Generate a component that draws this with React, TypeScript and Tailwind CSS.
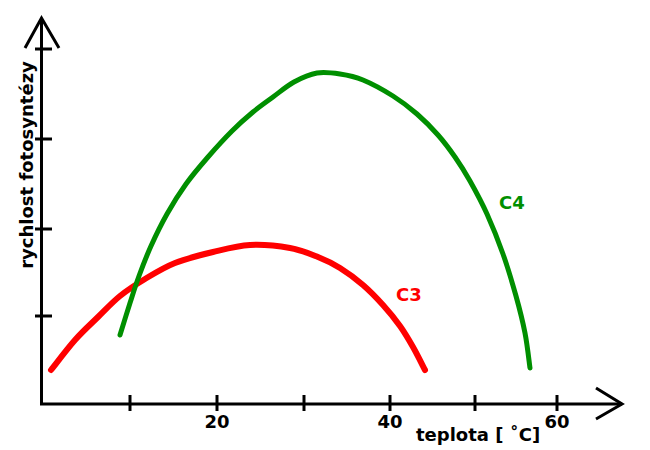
const c3: [number, number][] = [
  [51, 370], [75, 340], [98, 317], [120, 296], [145, 279], [175, 263], [213, 252],
  [250, 245], [290, 248], [318, 257], [340, 268], [363, 285], [383, 305], [400, 326],
  [413, 347], [425, 370],
];

const c4: [number, number][] = [
  [120, 335], [130, 303], [139, 276], [151, 246], [167, 214], [186, 184], [208, 157],
  [232, 131], [253, 112], [273, 97], [294, 82], [317, 73], [340, 74], [363, 80],
  [393, 96], [417, 114], [438, 135], [455, 157], [470, 181], [487, 214], [503, 254],
  [516, 296], [525, 333], [530, 368],
];

// catmull-rom -> cubic bezier
function smooth(pts: [number, number][]) {
  let d = `M${pts[0][0]},${pts[0][1]}`;
  for (let i = 0; i < pts.length - 1; i++) {
    const p0 = pts[i - 1] ?? pts[i];
    const p1 = pts[i];
    const p2 = pts[i + 1];
    const p3 = pts[i + 2] ?? p2;
    const c1x = p1[0] + (p2[0] - p0[0]) / 6;
    const c1y = p1[1] + (p2[1] - p0[1]) / 6;
    const c2x = p2[0] - (p3[0] - p1[0]) / 6;
    const c2y = p2[1] - (p3[1] - p1[1]) / 6;
    d += ` C${c1x},${c1y} ${c2x},${c2y} ${p2[0]},${p2[1]}`;
  }
  return d;
}

const yTicks = [49, 139, 229, 316];
const xTicks = [130, 217, 304, 390, 475, 557];
const xLabels = [
  { x: 217, t: "20" },
  { x: 390, t: "40" },
  { x: 557, t: "60" },
];

export default function App() {
  return (
    <div className="h-[450px] w-[650px] bg-white">
      <svg
        width="650"
        height="450"
        viewBox="0 0 650 450"
        className="block font-['DejaVu_Sans',sans-serif] font-bold"
      >
        <g stroke="#000" strokeWidth="3" fill="none">
          <line x1="41.5" y1="18" x2="41.5" y2="405" />
          <line x1="40" y1="404" x2="622" y2="404" />
          <polyline points="25,48 41.5,18 59,48" strokeLinejoin="miter" />
          <polyline points="596,388 622,404 596,419" />
          {yTicks.map((y) => (
            <line key={y} x1="35" y1={y} x2="52" y2={y} />
          ))}
          {xTicks.map((x) => (
            <line key={x} x1={x} y1="395" x2={x} y2="411" />
          ))}
        </g>

        <path d={smooth(c3)} stroke="#ff0000" strokeWidth="6" fill="none" strokeLinecap="round" strokeLinejoin="round" />
        <path d={smooth(c4)} stroke="#008f00" strokeWidth="5" fill="none" strokeLinecap="round" strokeLinejoin="round" />

        <g fontSize="18" fill="#000">
          {xLabels.map((l) => (
            <text key={l.t} x={l.x} y="428" textAnchor="middle">
              {l.t}
            </text>
          ))}
          <text x="416" y="441">teplota [ ˚C]</text>
          <text x="0" y="0" textAnchor="middle" transform="translate(33,165) rotate(-90)">
            rychlost fotosyntézy
          </text>
        </g>

        <text x="499" y="209" fontSize="18" fill="#008f00">C4</text>
        <text x="396" y="301" fontSize="18" fill="#ff0000">C3</text>
      </svg>
    </div>
  );
}
